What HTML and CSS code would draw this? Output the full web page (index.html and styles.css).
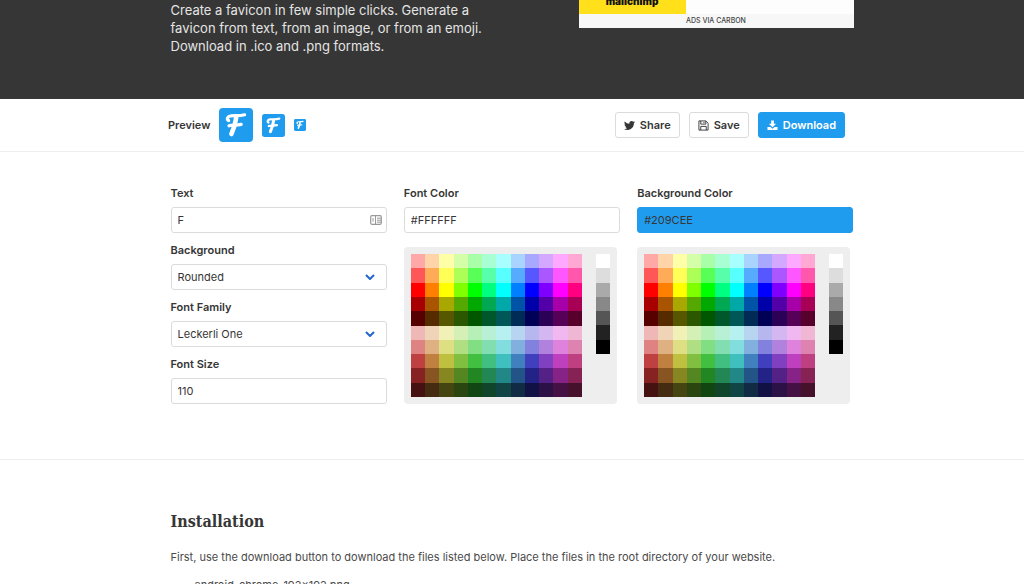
FILE: index.html
```html
<!DOCTYPE html>
<html lang="en">
<head>
<meta charset="utf-8">
<title>Favicon Generator</title>
<link rel="stylesheet" href="styles.css">
</head>
<body>
<svg class="sprite" aria-hidden="true">
  <symbol id="mark" viewBox="0 0 34 34">
    <rect width="34" height="34" rx="4" fill="#209cee"/>
    <g fill="none" stroke="#fff" stroke-linecap="round" stroke-linejoin="round">
      <path stroke-width="3.2" d="M9.600 12.600C7.200 11.600 8.400 8.200 12 7.900C16.500 7.400 20 8.200 25.600 6.800"/>
      <path stroke-width="4.600" d="M17.200 9.500C16.600 15 15.200 20 12.400 26"/>
      <path stroke-width="3.200" d="M10 17.800C13 16.800 17.500 17.600 22.200 16.400"/>
    </g>
  </symbol>
</svg>
<header class="hero">
  <div class="hero-inner container">
    <p class="lead">Create a favicon in few simple clicks. Generate a favicon from text, from an image, or from an emoji. Download in .ico and .png formats.</p>
    <a class="ad" href="#">
      <span class="ad-image"><span>mailchimp</span></span>
      <span class="ad-via">ADS VIA CARBON</span>
    </a>
  </div>
</header>
<section class="toolbar">
  <div class="toolbar-inner">
    <div class="preview">
      <span class="preview-label">Preview</span>
      <svg class="mark-lg"><use href="#mark"/></svg>
      <svg class="mark-md"><use href="#mark"/></svg>
      <svg class="mark-sm"><use href="#mark"/></svg>
    </div>
    <div class="actions">
      <button class="btn" type="button">
        <svg viewBox="0 0 24 24"><path fill="currentColor" d="M24 4.600a10 10 0 0 1-2.800.8 5 5 0 0 0 2.200-2.700 10 10 0 0 1-3.100 1.200 4.900 4.900 0 0 0-8.400 4.500A14 14 0 0 1 1.700 3.200a4.900 4.900 0 0 0 1.500 6.500 5 5 0 0 1-2.200-.6 4.900 4.900 0 0 0 3.900 4.900 5 5 0 0 1-2.200.1 4.900 4.900 0 0 0 4.600 3.400A10 10 0 0 1 0 19.500 14 14 0 0 0 21.500 7.100 10 10 0 0 0 24 4.600z"/></svg>
        Share</button>
      <button class="btn" type="button">
        <svg viewBox="0 0 24 24" fill="none" stroke="currentColor" stroke-width="2"><path d="M2 2h15l5 5v15H2z"/><path d="M6 2v7h11V2M13 4v3M6 22v-8h12v8"/></svg>
        Save</button>
      <button class="btn btn-primary" type="button">
        <svg viewBox="0 0 24 24"><path fill="currentColor" d="M9 1h6v7h5l-8 8-8-8h5zM1 15h6.500l4.500 4 4.500-4H23v7H1z"/></svg>
        Download</button>
    </div>
  </div>
</section>
<main>
  <form class="editor container">
    <div class="column">
      <div class="field">
        <label for="text">Text</label>
        <div class="control">
          <input id="text" type="text" value="F">
          <svg class="card-icon" viewBox="0 0 12 10" fill="none" stroke="#999"><rect x=".7" y=".7" width="10.600" height="8.600" rx="1.200" stroke-width="1.200"/><path d="M5.500 1v8M7 3.200h4M7 5.200h4M7 7.200h4M3 3v3.500"/></svg>
        </div>
      </div>
      <div class="field">
        <label for="background">Background</label>
        <div class="control">
          <select id="background"><option>Rounded</option><option>Square</option><option>Circle</option></select>
          <svg class="chevron" viewBox="0 0 10 6"><path d="M1 1l4 4 4-4"/></svg>
        </div>
      </div>
      <div class="field">
        <label for="family">Font Family</label>
        <div class="control">
          <select id="family"><option>Leckerli One</option></select>
          <svg class="chevron" viewBox="0 0 10 6"><path d="M1 1l4 4 4-4"/></svg>
        </div>
      </div>
      <div class="field">
        <label for="size">Font Size</label>
        <input id="size" type="text" value="110">
      </div>
    </div>
    <div class="column">
      <div class="field">
        <label for="font-color">Font Color</label>
        <input id="font-color" type="text" value="#FFFFFF">
      </div>
      <div class="picker"><div class="hues"></div><div class="grays"></div></div>
    </div>
    <div class="column">
      <div class="field">
        <label for="background-color">Background Color</label>
        <input id="background-color" class="filled" type="text" value="#209CEE">
      </div>
      <div class="picker"><div class="hues"></div><div class="grays"></div></div>
    </div>
  </form>
  <section class="installation">
    <div class="container">
      <h2>Installation</h2>
      <p>First, use the download button to download the files listed below. Place the files in the root directory of your website.</p>
      <ul>
        <li>android-chrome-192x192.png</li>
      </ul>
    </div>
  </section>
</main>
<script src="script.js"></script>
</body>
</html>
```
FILE: styles.css
```css
* { box-sizing: border-box; }
html, body { height: 100%; overflow: hidden; }
body {
  margin: 0;
  background: #fff;
  color: #363636;
  font-family: Inter, "Liberation Sans", sans-serif;
  font-size: 11px;
  line-height: 16px;
}
.sprite { display: none; }
.container { width: 100%; max-width: 683px; margin: 0 auto; }

.hero { background: #363636; padding-bottom: 44px; }
.hero-inner { display: flex; justify-content: space-between; align-items: flex-start; }
.lead {
  max-width: 312px;
  margin: 0;
  padding-top: 1px;
  color: #e4e4e4;
  font-size: 13px;
  line-height: 18px;
}
.ad { width: 275px; background: #f7f7f7; color: #444; text-decoration: none; }
.ad-image { display: flex; height: 14px; background: #fdfdfd; overflow: hidden; }
.ad-image span {
  width: 107px;
  height: 14px;
  background: #ffe01b;
  color: #111;
  font-size: 10px;
  font-weight: 900;
  line-height: 2px;
  text-align: center;
}
.ad-via {
  display: block;
  font-size: 7px;
  font-weight: 500;
  line-height: 14px;
  text-align: center;
}

.toolbar { border-bottom: 1px solid #eee; }
.toolbar-inner {
  display: flex;
  justify-content: space-between;
  align-items: center;
  max-width: 688px;
  margin: 0 auto;
  padding: 9px 11px 9px 0;
}
.preview { display: flex; align-items: center; gap: 9px; }
.preview-label { font-weight: 600; }
.mark-lg { width: 34px; height: 34px; }
.mark-md { width: 23px; height: 23px; }
.mark-sm { width: 12px; height: 12px; }
.actions { display: flex; gap: 9px; }
.btn {
  display: flex;
  align-items: center;
  gap: 5px;
  height: 26px;
  padding: 0 8px;
  border: 1px solid #dbdbdb;
  border-radius: 3px;
  background: #fff;
  color: #363636;
  font: inherit;
  font-weight: 600;
}
.btn svg { width: 11px; height: 11px; }
.btn-primary { border-color: #209cee; background: #209cee; color: #fff; }

.editor {
  display: grid;
  grid-template-columns: repeat(3, 1fr);
  gap: 17px;
  padding: 33px 0 55px;
}
.column { display: flex; flex-direction: column; gap: 9px; }
.field label { display: block; margin-bottom: 6px; font-weight: 600; }
.field input, .field select {
  display: block;
  width: 100%;
  height: 26px;
  padding: 0 6px;
  border: 1px solid #dbdbdb;
  border-radius: 3px;
  background: #fff;
  color: #363636;
  font: inherit;
  appearance: none;
}
.field input.filled { border-color: #209cee; background: #209cee; }
.control { position: relative; }
.control svg { position: absolute; top: 50%; transform: translateY(-50%); pointer-events: none; }
.card-icon { right: 5px; width: 12px; height: 10px; }
.chevron { right: 12px; width: 10px; height: 6px; fill: none; stroke: #2366d1; stroke-width: 2; }

.picker {
  display: flex;
  align-items: flex-start;
  justify-content: space-between;
  width: 213px;
  margin-top: 5px;
  padding: 7px;
  border-radius: 4px;
  background: #eee;
}
.hues { display: grid; grid-template-columns: repeat(12, 1fr); grid-auto-rows: 1fr; width: 171px; height: 143px; }
.grays { display: grid; grid-auto-rows: 1fr; width: 14px; height: 100px; }
.swatch { min-width: 0; min-height: 0; padding: 0; border: 0; }

.installation { border-top: 1px solid #eee; padding-top: 50px; }
.installation h2 {
  margin: 0 0 15px;
  font-family: "DejaVu Serif Condensed", "DejaVu Serif", serif;
  font-size: 16px;
  font-weight: 700;
  line-height: 24px;
}
.installation p { margin: 0 0 12px; color: #4a4a4a; }
.installation ul { margin: 0; padding-left: 24px; color: #4a4a4a; list-style: none; }
```
FILE: script.js
```js
const rows = [
  [100, 83], [100, 67], [100, 50], [100, 33], [100, 17],
  [65, 83], [58, 69], [50, 50], [60, 33], [60, 17]
];
const grays = ["#ffffff", "#dddddd", "#aaaaaa", "#888888", "#555555", "#222222", "#000000"];

function addSwatch(parent, color) {
  const swatch = document.createElement("button");
  swatch.type = "button";
  swatch.className = "swatch";
  swatch.style.background = color;
  swatch.setAttribute("aria-label", color);
  parent.append(swatch);
}

document.querySelectorAll(".hues").forEach((grid) => {
  rows.forEach(([saturation, lightness]) => {
    for (let hue = 0; hue < 360; hue += 30) {
      addSwatch(grid, `hsl(${hue}, ${saturation}%, ${lightness}%)`);
    }
  });
});
document.querySelectorAll(".grays").forEach((grid) => {
  grays.forEach((gray) => addSwatch(grid, gray));
});
```
